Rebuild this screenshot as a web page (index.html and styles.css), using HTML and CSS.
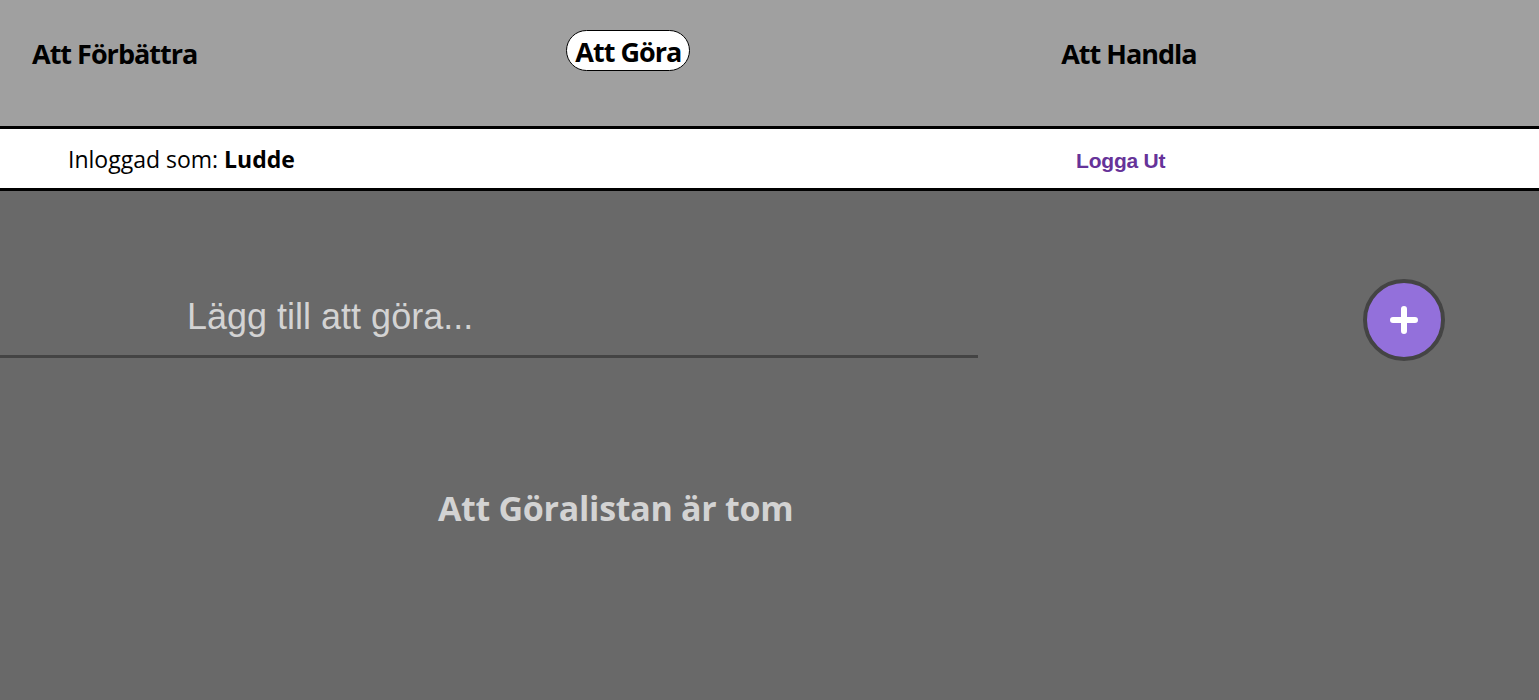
FILE: index.html
```html
<!DOCTYPE html>
<html lang="sv">
<head>
<meta charset="utf-8">
<title>Att Göra</title>
<link rel="stylesheet" href="styles.css">
</head>
<body>
<header class="topnav">
  <nav class="tabs">
    <a class="tab tab-first" href="#">Att Förbättra</a>
    <a class="tab tab-active" href="#">Att Göra</a>
    <a class="tab tab-last" href="#">Att Handla</a>
  </nav>
</header>
<div class="userbar">
  <span class="user">Inloggad som: <b>Ludde</b></span>
  <a class="logout" href="#">Logga Ut</a>
</div>
<main class="content">
  <form class="addrow">
    <input class="addinput" type="text" placeholder="Lägg till att göra...">
    <button class="addbtn" type="button" aria-label="Lägg till">
      <svg width="28" height="28" viewBox="0 0 28 28"><path d="M14 3v22M3 14h22" stroke="#fff" stroke-width="6" stroke-linecap="round"/></svg>
    </button>
  </form>
  <p class="empty">Att Göralistan är tom</p>
</main>
</body>
</html>
```
FILE: styles.css
```css
html, body {
  margin: 0;
  padding: 0;
}
body {
  background: #696969;
  font-family: "Open Sans", "Noto Sans", sans-serif;
  min-height: 700px;
}
.topnav {
  background: #a0a0a0;
  height: 126px;
  border-bottom: 3px solid #000;
  box-sizing: content-box;
}
.tabs {
  display: flex;
  align-items: flex-start;
  padding-top: 30px;
}
.tab {
  color: #000;
  text-decoration: none;
  font-weight: 700;
  font-size: 27px;
  line-height: 41px;
  letter-spacing: -1px;
  padding-top: 3px;
}
.tab-first {
  margin-left: 32px;
}
.tab-active {
  margin-left: 369px;
  background: #fff;
  border: 1px solid #000;
  border-radius: 999px;
  padding: 3px 8px 0;
  line-height: 36px;
}
.tab-last {
  margin-left: 371px;
}
.userbar {
  background: #fff;
  height: 59px;
  border-bottom: 3px solid #000;
  display: flex;
  align-items: center;
}
.user {
  margin-left: 68px;
  font-size: 23px;
  color: #000;
  width: 1008px;
}
.user b {
  font-weight: 700;
}
.logout {
  font-family: "Liberation Sans", Arial, sans-serif;
  font-weight: 700;
  font-size: 21px;
  letter-spacing: -0.2px;
  color: #663399;
  text-decoration: none;
  margin-top: 4px;
}
.content {
  padding-top: 88px;
}
.addrow {
  display: flex;
  align-items: center;
  margin: 0;
}
.addinput {
  width: 978px;
  height: 76px;
  box-sizing: border-box;
  margin: 0;
  background: transparent;
  border: 0;
  border-bottom: 3px solid #444;
  padding: 0 0 4px 187px;
  font-family: "Liberation Sans", Arial, sans-serif;
  font-size: 36px;
  color: #d3d3d3;
  outline: none;
}
.addinput::placeholder {
  color: #d3d3d3;
  opacity: 1;
}
.addbtn {
  margin: 0 0 0 385px;
  width: 82px;
  height: 82px;
  box-sizing: border-box;
  border-radius: 50%;
  border: 4px solid #444;
  background: #9370db;
  display: flex;
  align-items: center;
  justify-content: center;
  padding: 0;
  cursor: pointer;
}
.empty {
  width: 80%;
  text-align: center;
  margin: 124px 0 0 0;
  color: #d3d3d3;
  font-weight: 700;
  font-size: 34px;
  letter-spacing: -0.3px;
}
```
